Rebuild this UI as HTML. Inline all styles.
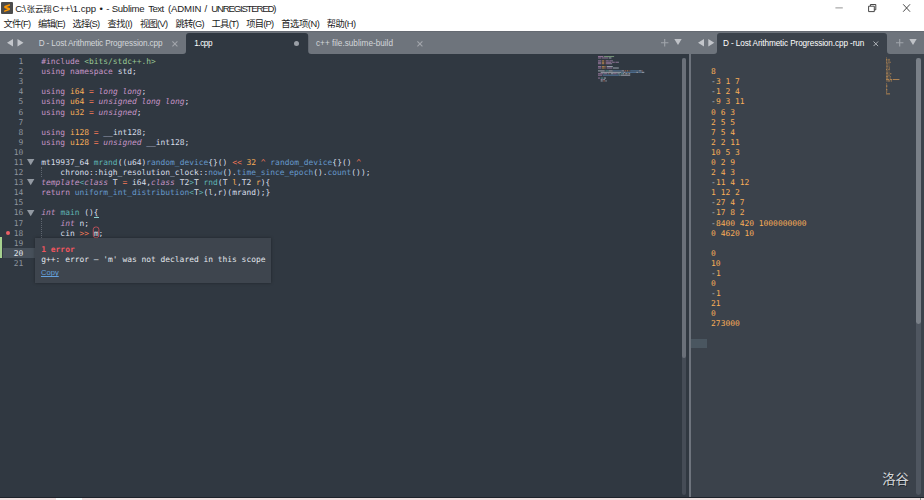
<!DOCTYPE html>
<html lang="zh">
<head>
<meta charset="utf-8">
<title>Sublime Text</title>
<style>
*{margin:0;padding:0;box-sizing:border-box}
html,body{width:924px;height:500px;overflow:hidden;background:#303841}
body{position:relative;font-family:"Liberation Sans","Noto Sans CJK SC",sans-serif}
.abs{position:absolute}
.tx{white-space:nowrap;line-height:14px;height:14px}
.code{font-family:"DejaVu Sans Mono","Liberation Mono",monospace;font-size:7.93px;line-height:10.1px;white-space:pre;color:#d8dee9}
.ln{color:#8d949e;text-align:right}
.k{color:#c695c6}.ki{color:#c695c6;font-style:italic}.s{color:#99c794}.n{color:#f9ae58}.f{color:#6699cc}.o{color:#f97b58}.t{color:#5fb4b4}.p{color:#f9ae58}
.out{color:#f9ae58}.mi{color:#b9bfc8}
.mini{transform-origin:0 0;transform:scale(0.1415);line-height:10.1px}
.mini span{background:linear-gradient(to bottom,transparent 8%,var(--c) 8%,var(--c) 92%,transparent 92%)}
.mk,.mki{color:#c695c6;--c:rgba(198,149,198,.5)}.ms{color:#99c794;--c:rgba(153,199,148,.5)}.mn,.mp{color:#f9ae58;--c:rgba(249,174,88,.5)}.mf{color:#6699cc;--c:rgba(102,153,204,.5)}.mo{color:#f97b58;--c:rgba(249,123,88,.5)}.mt{color:#5fb4b4;--c:rgba(95,180,180,.5)}.md{color:#d8dee9;--c:rgba(216,222,233,.5)}
</style>
</head>
<body>
<!-- ===== title bar + menu ===== -->
<div class="abs" style="left:0;top:0;width:924px;height:31px;background:#fff"></div>
<svg class="abs" style="left:1px;top:2px" width="12" height="12" viewBox="0 0 12 12"><rect width="12" height="12" rx="1" fill="#4c4c4c"/><path d="M8.900 2.100 3.300 4v2.100l3.400 1.100-3.500 1.200v1.700l5.700-2V6L5.500 4.900l3.400-1.100z" fill="#ff9800"/></svg>
<svg class="abs" style="left:830px;top:0" width="94" height="16" viewBox="0 0 94 16"><path d="M5.400 7.900h7.400" stroke="#888" stroke-width=".9" fill="none"/><path d="M38.600 6.200h5.700v5.400h-5.700z M40.400 6v-1.500h5.400v5.300h-1.400" stroke="#333" stroke-width=".9" fill="none" stroke-linejoin="round"/><path d="M73.200 4.300l6.800 7.400M80 4.300l-6.800 7.400" stroke="#333" stroke-width=".9" fill="none"/></svg>

<!-- ===== left pane ===== -->
<div class="abs" style="left:0;top:31px;width:689px;height:23px;background:#6e747c"></div>
<div class="abs" style="left:0;top:31px;width:924px;height:1px;background:#656a72"></div>
<div class="abs" style="left:0;top:54px;width:689px;height:443px;background:#303841"></div>
<!-- active tab 1.cpp -->
<svg class="abs" style="left:183px;top:33px" width="129" height="21" viewBox="0 0 129 21"><path d="M0 21c2 0 3-1 3-3V3c0-2 1-3 3-3h116.200c2 0 3 1 3 3v15c0 2 1 3 3 3z" fill="#303841"/></svg>
<svg class="abs" style="left:6.800px;top:39px" width="20" height="8" viewBox="0 0 20 8"><path d="M6 0v7.500L0 3.750zM10.500 0v7.500l6-3.750z" fill="#c3c6cb"/></svg>
<svg class="abs" style="left:171.700px;top:40.800px" width="6" height="6" viewBox="0 0 6 6"><path d="M.4.400l5 5M5.400.400l-5 5" stroke="#a2a6ac" stroke-width="1.1"/></svg>
<div class="abs" style="left:294.400px;top:41px;width:5px;height:5px;border-radius:50%;background:#9a9fa6"></div>
<svg class="abs" style="left:416.800px;top:40.600px" width="6" height="6" viewBox="0 0 6 6"><path d="M.4.400l5 5M5.400.400l-5 5" stroke="#a2a6ac" stroke-width="1.1"/></svg>
<svg class="abs" style="left:661px;top:39px" width="8" height="8" viewBox="0 0 8 8"><path d="M0 3.700h7.400M3.700 0v7.400" stroke="#a0a4aa" stroke-width="1.1"/></svg>
<svg class="abs" style="left:674px;top:39px" width="8" height="7" viewBox="0 0 8 7"><path d="M.3 0h7.400L4 6z" fill="#bfc2c7"/></svg>

<!-- gutter -->
<div class="abs" style="left:0;top:237px;width:2.300px;height:21px;background:#a6d18f"></div>
<div class="abs" style="left:2.500px;top:248px;width:33px;height:10px;background:#47505a"></div>
<div class="abs" style="left:5.800px;top:230.500px;width:4px;height:4px;border-radius:50%;background:#ec5f66"></div>
<div id="gutter" class="abs code ln" style="left:0;top:57.050px;width:23.200px">1
2
3
4
5
6
7
8
9
10
11
12
13
14
15
16
17
18
19
<span style="color:#e4e8ee">20</span>
21</div>
<!-- fold arrows -->
<svg class="abs" style="left:26.700px;top:159px" width="8" height="7" viewBox="0 0 8 7"><path d="M0 0h7.400L3.700 6.200z" fill="#9299a2"/></svg>
<svg class="abs" style="left:26.700px;top:179.200px" width="8" height="7" viewBox="0 0 8 7"><path d="M0 0h7.400L3.700 6.200z" fill="#9299a2"/></svg>
<svg class="abs" style="left:26.700px;top:209.500px" width="8" height="7" viewBox="0 0 8 7"><path d="M0 0h7.400L3.700 6.200z" fill="#9299a2"/></svg>
<!-- indent guides -->
<div class="abs" style="left:41px;top:167px;width:0;height:10px;border-left:1px dotted #5f6670"></div>
<div class="abs" style="left:41px;top:218px;width:0;height:20px;border-left:1px dotted #5f6670"></div>
<!-- code -->
<div id="code" class="abs code" style="left:41.300px;top:57.050px"><span class="k">#include</span> <span class="s">&lt;bits/stdc++.h&gt;</span>
<span class="k">using</span> <span class="k">namespace</span> std;

<span class="k">using</span> <span class="n">i64</span> <span class="o">=</span> <span class="ki">long long</span>;
<span class="k">using</span> <span class="n">u64</span> <span class="o">=</span> <span class="ki">unsigned long long</span>;
<span class="k">using</span> <span class="n">u32</span> <span class="o">=</span> <span class="ki">unsigned</span>;

<span class="k">using</span> <span class="n">i128</span> <span class="o">=</span> __int128;
<span class="k">using</span> <span class="n">u128</span> <span class="o">=</span> <span class="ki">unsigned</span> __int128;

mt19937_64 <span class="t">mrand</span>((u64)<span class="f">random_device</span>{}() <span class="o">&lt;&lt;</span> <span class="n">32</span> <span class="o">^</span> <span class="f">random_device</span>{}() <span class="o">^</span>
    chrono::high_resolution_clock::<span class="f">now</span>().<span class="f">time_since_epoch</span>().<span class="f">count</span>());
<span class="ki">template</span><span class="t">&lt;</span><span class="ki">class</span> T <span class="o">=</span> i64,<span class="ki">class</span> T2<span class="t">&gt;</span>T <span class="t">rnd</span>(T <span class="p">l</span>,T2 <span class="p">r</span>){
<span class="k">return</span> <span class="f">uniform_int_distribution</span><span class="t">&lt;</span>T<span class="t">&gt;</span>(l,r)(mrand);}

<span class="ki">int</span> <span class="t">main</span> (){
    <span class="ki">int</span> n;
    cin <span class="o">&gt;&gt;</span> m;


</div>
<!-- bracket / error marks -->
<div class="abs" style="left:93.800px;top:217.100px;width:5px;height:.9px;background:#8ccfce"></div>
<svg class="abs" style="left:92px;top:226px" width="9" height="13" viewBox="0 0 9 13"><rect x="1.300" y="1" width="5.600" height="10.600" rx="2.400" fill="none" stroke="#d2555f" stroke-width=".85"/></svg>

<!-- popup -->
<div class="abs" style="left:35px;top:237.900px;width:236px;height:45.600px;background:#3e454e;box-shadow:0 0 3px rgba(0,0,0,.35)"></div>
<div class="abs code" style="left:41.300px;top:244.900px;color:#f0555f;font-weight:bold">1 error</div>
<div class="abs code" style="left:41.300px;top:255px;color:#e3e7ed">g++: error – 'm' was not declared in this scope</div>
<div class="abs tx" style="left:41px;top:265.700px;font-size:7.600px;color:#65a2de;text-decoration:underline;text-decoration-skip-ink:none;text-underline-offset:1.400px;text-decoration-thickness:.9px">Copy</div>

<!-- minimap left -->
<svg class="abs" style="left:597.800px;top:55.800px" width="60" height="40" viewBox="0 0 60 40"><g opacity="0.62"><rect x="0.00" y="0.00" width="5.37" height="1.05" fill="#c695c6"/><rect x="6.04" y="0.00" width="10.07" height="1.05" fill="#99c794"/><rect x="0.00" y="1.44" width="3.36" height="1.05" fill="#c695c6"/><rect x="4.03" y="1.44" width="6.04" height="1.05" fill="#c695c6"/><rect x="10.74" y="1.44" width="2.68" height="1.05" fill="#d8dee9"/><rect x="0.00" y="4.31" width="3.36" height="1.05" fill="#c695c6"/><rect x="4.03" y="4.31" width="2.01" height="1.05" fill="#f9ae58"/><rect x="6.71" y="4.31" width="0.67" height="1.05" fill="#f97b58"/><rect x="8.05" y="4.31" width="2.68" height="1.05" fill="#c695c6"/><rect x="11.41" y="4.31" width="2.68" height="1.05" fill="#c695c6"/><rect x="14.09" y="4.31" width="0.67" height="1.05" fill="#d8dee9"/><rect x="0.00" y="5.74" width="3.36" height="1.05" fill="#c695c6"/><rect x="4.03" y="5.74" width="2.01" height="1.05" fill="#f9ae58"/><rect x="6.71" y="5.74" width="0.67" height="1.05" fill="#f97b58"/><rect x="8.05" y="5.74" width="5.37" height="1.05" fill="#c695c6"/><rect x="14.09" y="5.74" width="2.68" height="1.05" fill="#c695c6"/><rect x="17.45" y="5.74" width="2.68" height="1.05" fill="#c695c6"/><rect x="20.13" y="5.74" width="0.67" height="1.05" fill="#d8dee9"/><rect x="0.00" y="7.18" width="3.36" height="1.05" fill="#c695c6"/><rect x="4.03" y="7.18" width="2.01" height="1.05" fill="#f9ae58"/><rect x="6.71" y="7.18" width="0.67" height="1.05" fill="#f97b58"/><rect x="8.05" y="7.18" width="5.37" height="1.05" fill="#c695c6"/><rect x="13.42" y="7.18" width="0.67" height="1.05" fill="#d8dee9"/><rect x="0.00" y="10.05" width="3.36" height="1.05" fill="#c695c6"/><rect x="4.03" y="10.05" width="2.68" height="1.05" fill="#f9ae58"/><rect x="7.38" y="10.05" width="0.67" height="1.05" fill="#f97b58"/><rect x="8.72" y="10.05" width="6.04" height="1.05" fill="#d8dee9"/><rect x="0.00" y="11.49" width="3.36" height="1.05" fill="#c695c6"/><rect x="4.03" y="11.49" width="2.68" height="1.05" fill="#f9ae58"/><rect x="7.38" y="11.49" width="0.67" height="1.05" fill="#f97b58"/><rect x="8.72" y="11.49" width="5.37" height="1.05" fill="#c695c6"/><rect x="14.76" y="11.49" width="6.04" height="1.05" fill="#d8dee9"/><rect x="0.00" y="14.36" width="6.71" height="1.05" fill="#d8dee9"/><rect x="7.38" y="14.36" width="3.36" height="1.05" fill="#5fb4b4"/><rect x="10.74" y="14.36" width="4.03" height="1.05" fill="#d8dee9"/><rect x="14.76" y="14.36" width="8.72" height="1.05" fill="#6699cc"/><rect x="23.49" y="14.36" width="2.68" height="1.05" fill="#d8dee9"/><rect x="26.84" y="14.36" width="1.34" height="1.05" fill="#f97b58"/><rect x="28.85" y="14.36" width="1.34" height="1.05" fill="#f9ae58"/><rect x="30.87" y="14.36" width="0.67" height="1.05" fill="#f97b58"/><rect x="32.21" y="14.36" width="8.72" height="1.05" fill="#6699cc"/><rect x="40.93" y="14.36" width="2.68" height="1.05" fill="#d8dee9"/><rect x="44.29" y="14.36" width="0.67" height="1.05" fill="#f97b58"/><rect x="2.68" y="15.80" width="20.80" height="1.05" fill="#d8dee9"/><rect x="23.49" y="15.80" width="2.01" height="1.05" fill="#6699cc"/><rect x="25.50" y="15.80" width="2.01" height="1.05" fill="#d8dee9"/><rect x="27.51" y="15.80" width="10.74" height="1.05" fill="#6699cc"/><rect x="38.25" y="15.80" width="2.01" height="1.05" fill="#d8dee9"/><rect x="40.26" y="15.80" width="3.36" height="1.05" fill="#6699cc"/><rect x="43.62" y="15.80" width="2.68" height="1.05" fill="#d8dee9"/><rect x="0.00" y="17.23" width="5.37" height="1.05" fill="#c695c6"/><rect x="5.37" y="17.23" width="0.67" height="1.05" fill="#5fb4b4"/><rect x="6.04" y="17.23" width="3.36" height="1.05" fill="#c695c6"/><rect x="10.07" y="17.23" width="0.67" height="1.05" fill="#d8dee9"/><rect x="11.41" y="17.23" width="0.67" height="1.05" fill="#f97b58"/><rect x="12.75" y="17.23" width="2.68" height="1.05" fill="#d8dee9"/><rect x="15.43" y="17.23" width="3.36" height="1.05" fill="#c695c6"/><rect x="19.46" y="17.23" width="1.34" height="1.05" fill="#d8dee9"/><rect x="20.80" y="17.23" width="0.67" height="1.05" fill="#5fb4b4"/><rect x="21.47" y="17.23" width="0.67" height="1.05" fill="#d8dee9"/><rect x="22.81" y="17.23" width="2.01" height="1.05" fill="#5fb4b4"/><rect x="24.83" y="17.23" width="1.34" height="1.05" fill="#d8dee9"/><rect x="26.84" y="17.23" width="0.67" height="1.05" fill="#f9ae58"/><rect x="27.51" y="17.23" width="2.01" height="1.05" fill="#d8dee9"/><rect x="30.20" y="17.23" width="0.67" height="1.05" fill="#f9ae58"/><rect x="30.87" y="17.23" width="1.34" height="1.05" fill="#d8dee9"/><rect x="0.00" y="18.67" width="4.03" height="1.05" fill="#c695c6"/><rect x="4.70" y="18.67" width="16.10" height="1.05" fill="#6699cc"/><rect x="20.80" y="18.67" width="0.67" height="1.05" fill="#5fb4b4"/><rect x="21.47" y="18.67" width="0.67" height="1.05" fill="#d8dee9"/><rect x="22.14" y="18.67" width="0.67" height="1.05" fill="#5fb4b4"/><rect x="22.81" y="18.67" width="9.39" height="1.05" fill="#d8dee9"/><rect x="0.00" y="21.54" width="2.01" height="1.05" fill="#c695c6"/><rect x="2.68" y="21.54" width="2.68" height="1.05" fill="#5fb4b4"/><rect x="6.04" y="21.54" width="2.01" height="1.05" fill="#d8dee9"/><rect x="2.68" y="22.98" width="2.01" height="1.05" fill="#c695c6"/><rect x="5.37" y="22.98" width="1.34" height="1.05" fill="#d8dee9"/><rect x="2.68" y="24.41" width="2.01" height="1.05" fill="#d8dee9"/><rect x="5.37" y="24.41" width="1.34" height="1.05" fill="#f97b58"/><rect x="7.38" y="24.41" width="1.34" height="1.05" fill="#d8dee9"/></g></svg>
<!-- left scrollbar -->
<div class="abs" style="left:681.500px;top:58px;width:4.500px;height:436.500px;border-radius:2.200px;background:#454c56"></div>
<div class="abs" style="left:681.500px;top:58px;width:4.500px;height:299.800px;border-radius:2.200px;background:#6a7079"></div>

<!-- ===== divider ===== -->
<div class="abs" style="left:689px;top:54px;width:1.600px;height:443px;background:#6e747d"></div>

<!-- ===== right pane ===== -->
<div class="abs" style="left:689px;top:31px;width:235px;height:23px;background:#6e747c"></div>
<div class="abs" style="left:689px;top:31px;width:235px;height:1px;background:#656a72"></div>
<div class="abs" style="left:690.600px;top:54px;width:233.400px;height:443px;background:#3b424b"></div>
<svg class="abs" style="left:714px;top:33px" width="176" height="21" viewBox="0 0 176 21"><path d="M0 21c2 0 3-1 3-3V3c0-2 1-3 3-3h164c2 0 3 1 3 3v15c0 2 1 3 3 3z" fill="#3b424b"/></svg>
<svg class="abs" style="left:697.700px;top:39px" width="20" height="8" viewBox="0 0 20 8"><path d="M6 0v7.500L0 3.750zM10.300 0v7.500l6-3.750z" fill="#c3c6cb"/></svg>
<svg class="abs" style="left:873.400px;top:40.800px" width="6" height="6" viewBox="0 0 6 6"><path d="M.5.500l4.600 4.600M5.100.500l-4.600 4.600" stroke="#b0b4b9" stroke-width="1"/></svg>
<svg class="abs" style="left:896px;top:39px" width="8" height="8" viewBox="0 0 8 8"><path d="M0 3.700h7.400M3.700 0v7.400" stroke="#a0a4aa" stroke-width="1.1"/></svg>
<svg class="abs" style="left:909px;top:39px" width="8" height="7" viewBox="0 0 8 7"><path d="M.3 0h7.400L4 6z" fill="#bfc2c7"/></svg>
<div class="abs" style="left:691px;top:338.800px;width:16px;height:9.700px;background:#4a5660"></div>
<div id="out" class="abs code out" style="left:711.100px;top:57.050px">
8
<span class="mi">-</span>3 1 7
<span class="mi">-</span>1 2 4
<span class="mi">-</span>9 3 11
0 6 3
2 5 5
7 5 4
2 2 11
10 5 3
0 2 9
2 4 3
<span class="mi">-</span>11 4 12
1 12 2
<span class="mi">-</span>27 4 7
<span class="mi">-</span>17 8 2
<span class="mi">-</span>8400 420 1000000000
0 4620 10

0
10
<span class="mi">-</span>1
0
<span class="mi">-</span>1
21
0
273000</div>
<svg class="abs" style="left:886px;top:55.800px" width="30" height="45" viewBox="0 0 30 45"><g opacity="0.6"><rect x="0.00" y="1.44" width="0.67" height="1.05" fill="#f9ae58"/><rect x="0.00" y="2.87" width="1.34" height="1.05" fill="#f9ae58"/><rect x="2.01" y="2.87" width="0.67" height="1.05" fill="#f9ae58"/><rect x="3.36" y="2.87" width="0.67" height="1.05" fill="#f9ae58"/><rect x="0.00" y="4.31" width="1.34" height="1.05" fill="#f9ae58"/><rect x="2.01" y="4.31" width="0.67" height="1.05" fill="#f9ae58"/><rect x="3.36" y="4.31" width="0.67" height="1.05" fill="#f9ae58"/><rect x="0.00" y="5.74" width="1.34" height="1.05" fill="#f9ae58"/><rect x="2.01" y="5.74" width="0.67" height="1.05" fill="#f9ae58"/><rect x="3.36" y="5.74" width="1.34" height="1.05" fill="#f9ae58"/><rect x="0.00" y="7.18" width="0.67" height="1.05" fill="#f9ae58"/><rect x="1.34" y="7.18" width="0.67" height="1.05" fill="#f9ae58"/><rect x="2.68" y="7.18" width="0.67" height="1.05" fill="#f9ae58"/><rect x="0.00" y="8.62" width="0.67" height="1.05" fill="#f9ae58"/><rect x="1.34" y="8.62" width="0.67" height="1.05" fill="#f9ae58"/><rect x="2.68" y="8.62" width="0.67" height="1.05" fill="#f9ae58"/><rect x="0.00" y="10.05" width="0.67" height="1.05" fill="#f9ae58"/><rect x="1.34" y="10.05" width="0.67" height="1.05" fill="#f9ae58"/><rect x="2.68" y="10.05" width="0.67" height="1.05" fill="#f9ae58"/><rect x="0.00" y="11.49" width="0.67" height="1.05" fill="#f9ae58"/><rect x="1.34" y="11.49" width="0.67" height="1.05" fill="#f9ae58"/><rect x="2.68" y="11.49" width="1.34" height="1.05" fill="#f9ae58"/><rect x="0.00" y="12.92" width="1.34" height="1.05" fill="#f9ae58"/><rect x="2.01" y="12.92" width="0.67" height="1.05" fill="#f9ae58"/><rect x="3.36" y="12.92" width="0.67" height="1.05" fill="#f9ae58"/><rect x="0.00" y="14.36" width="0.67" height="1.05" fill="#f9ae58"/><rect x="1.34" y="14.36" width="0.67" height="1.05" fill="#f9ae58"/><rect x="2.68" y="14.36" width="0.67" height="1.05" fill="#f9ae58"/><rect x="0.00" y="15.80" width="0.67" height="1.05" fill="#f9ae58"/><rect x="1.34" y="15.80" width="0.67" height="1.05" fill="#f9ae58"/><rect x="2.68" y="15.80" width="0.67" height="1.05" fill="#f9ae58"/><rect x="0.00" y="17.23" width="2.01" height="1.05" fill="#f9ae58"/><rect x="2.68" y="17.23" width="0.67" height="1.05" fill="#f9ae58"/><rect x="4.03" y="17.23" width="1.34" height="1.05" fill="#f9ae58"/><rect x="0.00" y="18.67" width="0.67" height="1.05" fill="#f9ae58"/><rect x="1.34" y="18.67" width="1.34" height="1.05" fill="#f9ae58"/><rect x="3.36" y="18.67" width="0.67" height="1.05" fill="#f9ae58"/><rect x="0.00" y="20.10" width="2.01" height="1.05" fill="#f9ae58"/><rect x="2.68" y="20.10" width="0.67" height="1.05" fill="#f9ae58"/><rect x="4.03" y="20.10" width="0.67" height="1.05" fill="#f9ae58"/><rect x="0.00" y="21.54" width="2.01" height="1.05" fill="#f9ae58"/><rect x="2.68" y="21.54" width="0.67" height="1.05" fill="#f9ae58"/><rect x="4.03" y="21.54" width="0.67" height="1.05" fill="#f9ae58"/><rect x="0.00" y="22.98" width="3.36" height="1.05" fill="#f9ae58"/><rect x="4.03" y="22.98" width="2.01" height="1.05" fill="#f9ae58"/><rect x="6.71" y="22.98" width="6.71" height="1.05" fill="#f9ae58"/><rect x="0.00" y="24.41" width="0.67" height="1.05" fill="#f9ae58"/><rect x="1.34" y="24.41" width="2.68" height="1.05" fill="#f9ae58"/><rect x="4.70" y="24.41" width="1.34" height="1.05" fill="#f9ae58"/><rect x="0.00" y="27.28" width="0.67" height="1.05" fill="#f9ae58"/><rect x="0.00" y="28.72" width="1.34" height="1.05" fill="#f9ae58"/><rect x="0.00" y="30.16" width="1.34" height="1.05" fill="#f9ae58"/><rect x="0.00" y="31.59" width="0.67" height="1.05" fill="#f9ae58"/><rect x="0.00" y="33.03" width="1.34" height="1.05" fill="#f9ae58"/><rect x="0.00" y="34.46" width="1.34" height="1.05" fill="#f9ae58"/><rect x="0.00" y="35.90" width="0.67" height="1.05" fill="#f9ae58"/><rect x="0.00" y="37.34" width="4.03" height="1.05" fill="#f9ae58"/></g></svg>
<!-- right scrollbar -->
<div class="abs" style="left:916px;top:58px;width:4.800px;height:436.500px;border-radius:2.400px;background:#4f5660"></div>
<div class="abs" style="left:916px;top:58px;width:4.800px;height:265.800px;border-radius:2.400px;background:#7a8088"></div>
<!-- watermark -->
<div class="abs tx" style="left:882.300px;top:469.500px;height:18px;line-height:18px;font-size:13.300px;color:#d3d6da;font-family:'Noto Sans CJK SC',sans-serif;text-shadow:.6px .6px 0 rgba(0,0,0,.5)">洛谷</div>

<!-- ===== texts ===== -->
<div class="abs tx" style="left:15.30px;top:2.00px;font-size:9.6px;color:#1c1c1c;font-family:'Liberation Sans','Noto Sans CJK SC',sans-serif;letter-spacing:-0.833px;word-spacing:0px;">C:\</div>
<div class="abs tx" style="left:26.70px;top:1.90px;font-size:8.4px;color:#1c1c1c;font-family:'Liberation Sans','Noto Sans CJK SC',sans-serif;letter-spacing:-0.062px;word-spacing:0px;">张云翔</div>
<div class="abs tx" style="left:52.40px;top:2.00px;font-size:9.6px;color:#1c1c1c;font-family:'Liberation Sans','Noto Sans CJK SC',sans-serif;letter-spacing:-0.085px;word-spacing:0px;">C++\1.cpp</div>
<div class="abs tx" style="left:99.50px;top:2.00px;font-size:9.6px;color:#1c1c1c;font-family:'Liberation Sans','Noto Sans CJK SC',sans-serif;letter-spacing:-0.859px;word-spacing:0px;">•</div>
<div class="abs tx" style="left:106.20px;top:2.00px;font-size:9.6px;color:#1c1c1c;font-family:'Liberation Sans','Noto Sans CJK SC',sans-serif;letter-spacing:-0.203px;word-spacing:0px;">-</div>
<div class="abs tx" style="left:111.80px;top:2.00px;font-size:9.6px;color:#1c1c1c;font-family:'Liberation Sans','Noto Sans CJK SC',sans-serif;letter-spacing:-0.329px;word-spacing:0px;">Sublime</div>
<div class="abs tx" style="left:148.30px;top:2.00px;font-size:9.6px;color:#1c1c1c;font-family:'Liberation Sans','Noto Sans CJK SC',sans-serif;letter-spacing:-0.570px;word-spacing:0px;">Text</div>
<div class="abs tx" style="left:168.00px;top:2.00px;font-size:9.6px;color:#1c1c1c;font-family:'Liberation Sans','Noto Sans CJK SC',sans-serif;letter-spacing:-0.142px;word-spacing:0px;">(ADMIN</div>
<div class="abs tx" style="left:204.40px;top:2.00px;font-size:9.6px;color:#1c1c1c;font-family:'Liberation Sans','Noto Sans CJK SC',sans-serif;letter-spacing:0.828px;word-spacing:0px;">/</div>
<div class="abs tx" style="left:211.20px;top:2.00px;font-size:9.6px;color:#1c1c1c;font-family:'Liberation Sans','Noto Sans CJK SC',sans-serif;letter-spacing:-1.185px;word-spacing:0px;">UNREGISTERED)</div>
<div class="abs tx" style="left:3.50px;top:16.80px;font-size:9.3px;color:#1c1c1c;font-family:'Liberation Sans','Noto Sans CJK SC',sans-serif;letter-spacing:-0.742px;word-spacing:0px;">文件(F)</div>
<div class="abs tx" style="left:38.00px;top:16.80px;font-size:9.3px;color:#1c1c1c;font-family:'Liberation Sans','Noto Sans CJK SC',sans-serif;letter-spacing:-0.875px;word-spacing:0px;">编辑(E)</div>
<div class="abs tx" style="left:72.50px;top:16.80px;font-size:9.3px;color:#1c1c1c;font-family:'Liberation Sans','Noto Sans CJK SC',sans-serif;letter-spacing:-0.875px;word-spacing:0px;">选择(S)</div>
<div class="abs tx" style="left:107.60px;top:16.80px;font-size:9.3px;color:#1c1c1c;font-family:'Liberation Sans','Noto Sans CJK SC',sans-serif;letter-spacing:-0.619px;word-spacing:0px;">查找(I)</div>
<div class="abs tx" style="left:140.00px;top:16.80px;font-size:9.3px;color:#1c1c1c;font-family:'Liberation Sans','Noto Sans CJK SC',sans-serif;letter-spacing:-0.750px;word-spacing:0px;">视图(V)</div>
<div class="abs tx" style="left:175.50px;top:16.80px;font-size:9.3px;color:#1c1c1c;font-family:'Liberation Sans','Noto Sans CJK SC',sans-serif;letter-spacing:-0.758px;word-spacing:0px;">跳转(G)</div>
<div class="abs tx" style="left:211.50px;top:16.80px;font-size:9.3px;color:#1c1c1c;font-family:'Liberation Sans','Noto Sans CJK SC',sans-serif;letter-spacing:-0.692px;word-spacing:0px;">工具(T)</div>
<div class="abs tx" style="left:246.20px;top:16.80px;font-size:9.3px;color:#1c1c1c;font-family:'Liberation Sans','Noto Sans CJK SC',sans-serif;letter-spacing:-0.775px;word-spacing:0px;">项目(P)</div>
<div class="abs tx" style="left:281.20px;top:16.80px;font-size:9.3px;color:#1c1c1c;font-family:'Liberation Sans','Noto Sans CJK SC',sans-serif;letter-spacing:-0.439px;word-spacing:0px;">首选项(N)</div>
<div class="abs tx" style="left:326.80px;top:16.80px;font-size:9.3px;color:#1c1c1c;font-family:'Liberation Sans','Noto Sans CJK SC',sans-serif;letter-spacing:-0.575px;word-spacing:0px;">帮助(H)</div>
<div class="abs tx" style="left:38.70px;top:36.60px;font-size:8.2px;color:#d3d6da;font-family:'Liberation Sans','Noto Sans CJK SC',sans-serif;letter-spacing:-0.133px;word-spacing:0px;">D - Lost Arithmetic Progression.cpp</div>
<div class="abs tx" style="left:194.20px;top:36.60px;font-size:8.2px;color:#ffffff;font-family:'Liberation Sans','Noto Sans CJK SC',sans-serif;letter-spacing:-0.433px;word-spacing:0px;">1.cpp</div>
<div class="abs tx" style="left:316.00px;top:36.60px;font-size:8.2px;color:#d3d6da;font-family:'Liberation Sans','Noto Sans CJK SC',sans-serif;letter-spacing:0.004px;word-spacing:0px;">c++ file.sublime-build</div>
<div class="abs tx" style="left:723.00px;top:36.60px;font-size:8.2px;color:#ffffff;font-family:'Liberation Sans','Noto Sans CJK SC',sans-serif;letter-spacing:-0.099px;word-spacing:0px;">D - Lost Arithmetic Progression.cpp -run</div>

<!-- ===== bottom strip ===== -->
<div class="abs" style="left:0;top:496.500px;width:924px;height:1.300px;background:#1d232b"></div>
<div class="abs" style="left:0;top:497.700px;width:924px;height:3px;background:#f3e0e0"></div>
<div class="abs" style="left:56px;top:497.700px;width:26px;height:3px;background:#fff"></div>
<div class="abs" style="left:920px;top:497.700px;width:1px;height:3px;background:#9a9090"></div>
</body>
</html>
